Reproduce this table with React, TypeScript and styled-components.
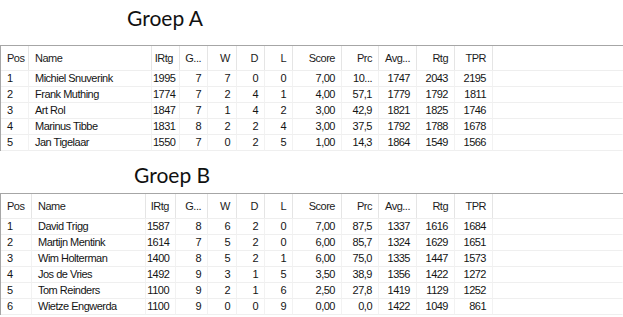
import styled, { createGlobalStyle } from "styled-components";

const GlobalStyle = createGlobalStyle`
  html, body {
    margin: 0;
    padding: 0;
    background: #ffffff;
  }
  body {
    font-family: "Liberation Sans", Arial, sans-serif;
  }
`;

type Align = "left" | "right";

interface Column {
  title: string;
  align: Align;
}

const columns: Column[] = [
  { title: "Pos", align: "left" },
  { title: "Name", align: "left" },
  { title: "IRtg", align: "right" },
  { title: "G...", align: "right" },
  { title: "W", align: "right" },
  { title: "D", align: "right" },
  { title: "L", align: "right" },
  { title: "Score", align: "right" },
  { title: "Prc", align: "right" },
  { title: "Avg...", align: "right" },
  { title: "Rtg", align: "right" },
  { title: "TPR", align: "right" },
];

const groupA = {
  widths: [28, 123, 28, 28, 29, 28, 28, 49, 37, 38, 38, 38],
  rows: [
    ["1", "Michiel Snuverink", "1995", "7", "7", "0", "0", "7,00", "10...", "1747", "2043", "2195"],
    ["2", "Frank Muthing", "1774", "7", "2", "4", "1", "4,00", "57,1", "1779", "1792", "1811"],
    ["3", "Art Rol", "1847", "7", "1", "4", "2", "3,00", "42,9", "1821", "1825", "1746"],
    ["4", "Marinus Tibbe", "1831", "8", "2", "2", "4", "3,00", "37,5", "1792", "1788", "1678"],
    ["5", "Jan Tigelaar", "1550", "7", "0", "2", "5", "1,00", "14,3", "1864", "1549", "1566"],
  ],
};

const groupB = {
  widths: [31, 114, 30, 32, 29, 28, 28, 49, 37, 38, 38, 38],
  rows: [
    ["1", "David Trigg", "1587", "8", "6", "2", "0", "7,00", "87,5", "1337", "1616", "1684"],
    ["2", "Martijn Mentink", "1614", "7", "5", "2", "0", "6,00", "85,7", "1324", "1629", "1651"],
    ["3", "Wim Holterman", "1400", "8", "5", "2", "1", "6,00", "75,0", "1335", "1447", "1573"],
    ["4", "Jos de Vries", "1492", "9", "3", "1", "5", "3,50", "38,9", "1356", "1422", "1272"],
    ["5", "Tom Reinders", "1100", "9", "2", "1", "6", "2,50", "27,8", "1419", "1129", "1252"],
    ["6", "Wietze Engwerda", "1100", "9", "0", "0", "9", "0,00", "0,0", "1422", "1049", "861"],
  ],
};

const Page = styled.div`
  width: 623px;
  height: 317px;
  overflow: hidden;
  background: #ffffff;
`;

const Title = styled.h2<{ $indent: number; $top: number; $bottom: number }>`
  margin: 0;
  padding: ${(p) => p.$top}px 0 ${(p) => p.$bottom}px ${(p) => p.$indent}px;
  font-family: "Lato", "Open Sans", sans-serif;
  font-weight: 400;
  font-size: 21px;
  line-height: 26px;
  color: #111111;
`;

const ListView = styled.div`
  border-top: 1px solid #a6a6a6;
  border-left: 1px solid #a6a6a6;
  font-size: 11px;
  letter-spacing: -0.5px;
  color: #141414;
`;

const HeaderRow = styled.div<{ $template: string }>`
  display: grid;
  grid-template-columns: ${(p) => p.$template};
  height: 24px;
  border-bottom: 1px solid #eeeeee;
`;

const HeaderCell = styled.div<{ $align: Align; $filler?: boolean }>`
  display: flex;
  align-items: center;
  justify-content: ${(p) => (p.$align === "right" ? "flex-end" : "flex-start")};
  padding: ${(p) => (p.$align === "right" ? "0 6px 0 1px" : "0 1px 0 6px")};
  border-right: 1px solid ${(p) => (p.$filler ? "transparent" : "#e5e5e5")};
  white-space: nowrap;
  overflow: hidden;
  color: #1c1c1c;
`;

const Row = styled.div<{ $template: string }>`
  display: grid;
  grid-template-columns: ${(p) => p.$template};
  height: 16px;
`;

const Cell = styled.div<{ $align: Align; $filler?: boolean }>`
  padding: ${(p) => (p.$align === "right" ? "0 6px 0 1px" : "0 1px 0 6px")};
  line-height: 15px;
  text-align: ${(p) => p.$align};
  border-bottom: 1px solid #efefef;
  border-right: 1px solid ${(p) => (p.$filler ? "transparent" : "#f2f2f2")};
  white-space: nowrap;
  overflow: hidden;
`;

function Standings({ widths, rows }: { widths: number[]; rows: string[][] }) {
  const template = widths.map((w) => `${w}px`).join(" ") + " 1fr";
  return (
    <ListView>
      <HeaderRow $template={template}>
        {columns.map((c) => (
          <HeaderCell key={c.title} $align={c.align}>
            {c.title}
          </HeaderCell>
        ))}
        <HeaderCell $align="left" $filler />
      </HeaderRow>
      {rows.map((row) => (
        <Row key={row[0]} $template={template}>
          {row.map((value, i) => (
            <Cell key={i} $align={columns[i].align}>
              {value}
            </Cell>
          ))}
          <Cell $align="left" $filler />
        </Row>
      ))}
    </ListView>
  );
}

export default function App() {
  return (
    <Page>
      <GlobalStyle />
      <Title $indent={127} $top={5} $bottom={14}>
        Groep A
      </Title>
      <Standings widths={groupA.widths} rows={groupA.rows} />
      <Title $indent={134} $top={11} $bottom={5}>
        Groep B
      </Title>
      <Standings widths={groupB.widths} rows={groupB.rows} />
    </Page>
  );
}
